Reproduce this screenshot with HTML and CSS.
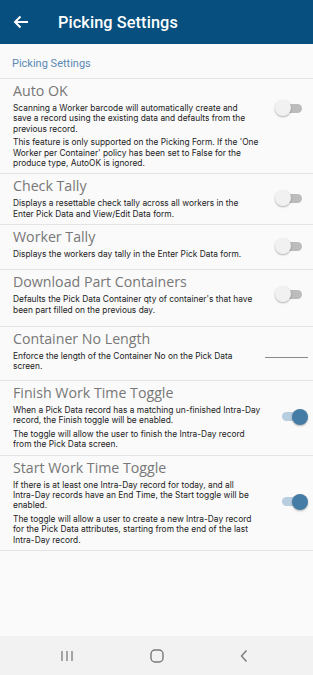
FILE: index.html
```html
<!DOCTYPE html>
<html>
<head>
<meta charset="utf-8">
<link rel="stylesheet" href="styles.css">
</head>
<body>
<header class="appbar">
  <svg class="back" width="16" height="14" viewBox="0 0 16 14"><path d="M15 7H2M7.5 1.5L2 7l5.5 5.5" fill="none" stroke="#fff" stroke-width="2"/></svg>
  <h1 class="title">Picking Settings</h1>
</header>
<main class="content">
  <div class="section-title">Picking Settings</div>

  <div class="item">
    <div class="row">
      <div class="text">
        <h2 class="heading">Auto OK</h2>
        <p class="desc">Scanning a Worker barcode will automatically create and save a record using the existing data and defaults from the previous record.</p>
      </div>
      <span class="toggle"><span class="knob"></span></span>
    </div>
    <p class="desc extra">This feature is only supported on the Picking Form. If the 'One Worker per Container' policy has been set to False for the produce type, AutoOK is ignored.</p>
  </div>

  <div class="item">
    <div class="row">
      <div class="text">
        <h2 class="heading">Check Tally</h2>
        <p class="desc">Displays a resettable check tally across all workers in the Enter Pick Data and View/Edit Data form.</p>
      </div>
      <span class="toggle"><span class="knob"></span></span>
    </div>
  </div>

  <div class="item">
    <div class="row tall">
      <div class="text">
        <h2 class="heading">Worker Tally</h2>
        <p class="desc">Displays the workers day tally in the Enter Pick Data form.</p>
      </div>
      <span class="toggle"><span class="knob"></span></span>
    </div>
  </div>

  <div class="item loose">
    <div class="row">
      <div class="text">
        <h2 class="heading">Download Part Containers</h2>
        <p class="desc">Defaults the Pick Data Container qty of container's that have been part filled on the previous day.</p>
      </div>
      <span class="toggle"><span class="knob"></span></span>
    </div>
  </div>

  <div class="item with-field">
    <div class="row">
      <div class="text">
        <h2 class="heading">Container No Length</h2>
        <p class="desc">Enforce the length of the Container No on the Pick Data screen.</p>
      </div>
      <span class="field"></span>
    </div>
  </div>

  <div class="item">
    <div class="row">
      <div class="text">
        <h2 class="heading">Finish Work Time Toggle</h2>
        <p class="desc">When a Pick Data record has a matching un-finished Intra-&#8288;Day record, the Finish toggle will be enabled.</p>
        <p class="desc">The toggle will allow the user to finish the Intra-&#8288;Day record from the Pick Data screen.</p>
      </div>
      <span class="toggle on"><span class="knob"></span></span>
    </div>
  </div>

  <div class="item">
    <div class="row">
      <div class="text">
        <h2 class="heading">Start Work Time Toggle</h2>
        <p class="desc">If there is at least one Intra-&#8288;Day record for today, and all Intra-&#8288;Day records have an End Time, the Start toggle will be enabled.</p>
        <p class="desc">The toggle will allow a user to create a new Intra-&#8288;Day record for the Pick Data attributes, starting from the end of the last Intra-&#8288;Day record.</p>
      </div>
      <span class="toggle on"><span class="knob"></span></span>
    </div>
  </div>
</main>
<nav class="sysnav">
  <svg width="14" height="12" viewBox="0 0 14 12"><path d="M2 1v10M7 1v10M12 1v10" stroke="#7a7a7a" stroke-width="1.3" fill="none"/></svg>
  <svg width="14" height="14" viewBox="0 0 14 14"><rect x="1" y="1" width="12" height="12" rx="4" fill="none" stroke="#7a7a7a" stroke-width="1.4"/></svg>
  <svg width="8" height="14" viewBox="0 0 8 14"><path d="M6.5 1.5L1.5 7l5 5.5" fill="none" stroke="#7a7a7a" stroke-width="1.4"/></svg>
</nav>
</body>
</html>
```

FILE: styles.css
```css
* { box-sizing: border-box; }
html, body { margin: 0; padding: 0; }
body {
  width: 313px;
  height: 675px;
  display: flex;
  flex-direction: column;
  background: #fafafa;
  font-family: "Open Sans", "DejaVu Sans", sans-serif;
  overflow: hidden;
}
.appbar {
  height: 44px;
  flex: none;
  background: #064f7e;
  display: flex;
  align-items: center;
  padding-left: 13px;
}
.back { margin-right: 29px; }
.title {
  margin: 0;
  font-family: Roboto, sans-serif;
  font-weight: 500;
  font-size: 16.3px;
  color: #fff;
  letter-spacing: 0.1px;
}
.content {
  flex: 1;
  display: flex;
  flex-direction: column;
}
.section-title {
  font-family: Roboto, sans-serif;
  font-size: 11px;
  color: #5a89b3;
  padding: 13px 12px 0;
  height: 35px;
  border-bottom: 1.5px solid #e4e4e4;
}
.item {
  padding: 3px 5px 5px 13px;
  border-bottom: 1.5px solid #e4e4e4;
}
.item.loose { padding-bottom: 11px; }
.item.with-field { padding-bottom: 8px; }
.row {
  display: flex;
  align-items: center;
}
.row.tall { min-height: 36px; align-items: flex-start; }
.row.tall .toggle { margin-top: 10px; }
.text { flex: 1; min-width: 0; padding-right: 18px; }
.heading {
  margin: 0 0 3px;
  font-weight: 400;
  font-size: 14.2px;
  line-height: 18px;
  color: #777;
}
.desc {
  margin: 0;
  font-family: Inter, "Open Sans", sans-serif;
  font-size: 8.4px;
  line-height: 10.4px;
  color: #222;
}
.desc + .desc, .extra { margin-top: 3px; }
.extra { padding-right: 42px; }
.toggle {
  position: relative;
  width: 27px;
  height: 16px;
  flex: none;
  margin-right: 6px;
}
.toggle::before {
  content: "";
  position: absolute;
  left: 2px;
  right: 0;
  top: 3.5px;
  height: 9px;
  border-radius: 5px;
  background: #bcbcbc;
}
.knob {
  position: absolute;
  left: 0;
  top: 0;
  width: 16px;
  height: 16px;
  border-radius: 50%;
  background: #f1f1f1;
  box-shadow: 0 1px 2px rgba(0,0,0,0.3);
}
.toggle.on { margin-right: 0; width: 26px; }
.toggle.on::before { background: #b7cde0; left: 0; right: 1px; }
.toggle.on .knob { left: auto; right: 0; background: #457ca6; }
.field {
  width: 43px;
  height: 1px;
  background: #8a8a8a;
  flex: none;
  margin-top: 13px;
}
.sysnav {
  height: 39px;
  flex: none;
  background: #f2f2f2;
  display: flex;
  align-items: center;
  justify-content: space-between;
  padding: 0 65px 0 60px;
}
```
